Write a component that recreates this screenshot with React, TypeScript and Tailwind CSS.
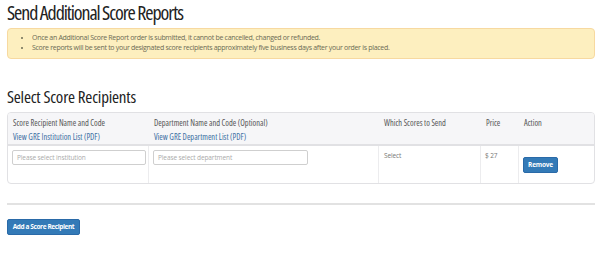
function Th({ w, children }: { w: string; children: React.ReactNode }) {
  return <div className={`${w} pl-[5px] pt-[3px]`}>{children}</div>;
}

export default function App() {
  return (
    <div className="h-[257px] w-[600px] bg-white px-[7px] pt-[1px] font-['Open_Sans',sans-serif]">
      <h1 className="text-[20px] leading-[24px] font-medium tracking-[-1.1px] text-[#222] font-stretch-condensed">
        Send Additional Score Reports
      </h1>
      <div className="mt-[3px] h-[31px] w-[588px] rounded-[4px] border border-[#f7d9a0] bg-[#fdefbf] pl-[13px] pt-[4px] text-[7px] leading-[10px] tracking-[-0.3px] text-[#6b6b55]">
        <ul className="list-disc pl-[11px]">
          <li>Once an Additional Score Report order is submitted, it cannot be cancelled, changed or refunded.</li>
          <li>Score reports will be sent to your designated score recipients approximately five business days after your order is placed.</li>
        </ul>
      </div>
      <h2 className="mt-[28px] text-[17px] leading-[20px] font-medium tracking-[-0.2px] text-[#222] font-stretch-condensed">
        Select Score Recipients
      </h2>
      <div className="mt-[5px] h-[72px] w-[588px] overflow-hidden rounded-[4px] border border-[#e1e1e4]">
        <div className="flex h-[33px] border-b-2 border-[#e1e1e4] bg-[#f6f6f8] text-[8.4px] leading-[14px] text-[#555] font-stretch-condensed">
          <Th w="w-[141px]">
            <div>Score Recipient Name and Code</div>
            <div className="text-[#3b6ea3]">View GRE Institution List (PDF)</div>
          </Th>
          <Th w="w-[230px]">
            <div>Department Name and Code (Optional)</div>
            <div className="text-[#3b6ea3]">View GRE Department List (PDF)</div>
          </Th>
          <Th w="w-[102px]">Which Scores to Send</Th>
          <Th w="w-[38px]">Price</Th>
          <Th w="flex-1">Action</Th>
        </div>
        <div className="flex h-[37px] text-[6.5px] leading-[10px] tracking-[-0.1px] text-[#777]">
          <div className="w-[141px] border-r border-[#ececee] pl-[4px] pt-[4px]">
            <div className="h-[15px] w-[134px] rounded-[2px] border border-[#cfcfcf] pl-[4px] leading-[13px] text-[#aaa]">
              Please select institution
            </div>
          </div>
          <div className="w-[230px] border-r border-[#ececee] pl-[4px] pt-[4px]">
            <div className="h-[15px] w-[155px] rounded-[2px] border border-[#cfcfcf] pl-[4px] leading-[13px] text-[#aaa]">
              Please select department
            </div>
          </div>
          <div className="w-[102px] border-r border-[#ececee] pl-[5px] pt-[5px]">Select</div>
          <div className="w-[38px] border-r border-[#ececee] pl-[4px] pt-[5px]">$ 27</div>
          <div className="flex-1 pl-[4px] pt-[11px]">
            <button className="h-[16px] w-[35px] rounded-[2px] border border-[#2a6aa8] bg-[#337ab7] text-[6.5px] font-bold tracking-[-0.2px] text-white">
              Remove
            </button>
          </div>
        </div>
      </div>
      <div className="mt-[19px] h-[2px] w-[588px] bg-[#e2e2e2]" />
      <button className="mt-[14px] h-[16px] w-[73px] rounded-[2px] border border-[#2a6aa8] bg-[#337ab7] text-[6.5px] font-bold tracking-[-0.4px] text-white">
        Add a Score Recipient
      </button>
    </div>
  );
}
